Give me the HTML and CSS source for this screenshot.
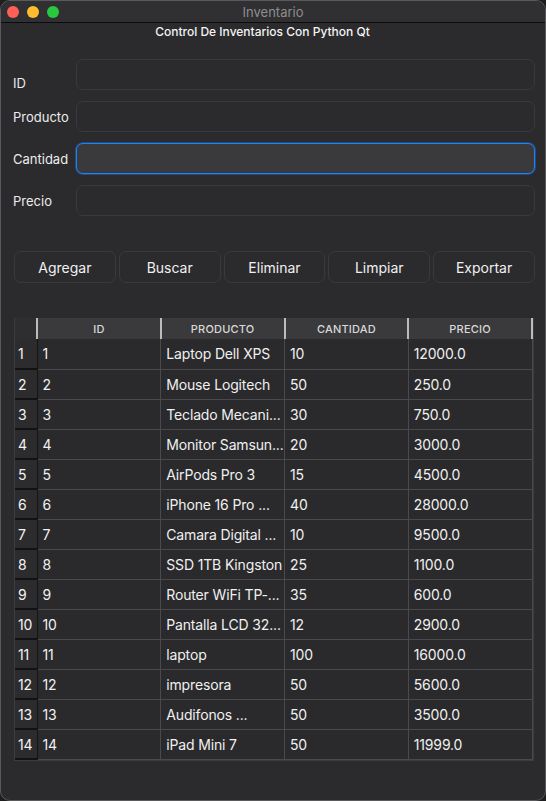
FILE: index.html
```html
<!DOCTYPE html>
<html lang="es">
<head>
<meta charset="utf-8">
<title>Inventario</title>
<link rel="stylesheet" href="styles.css">
</head>
<body>
<div class="window">
  <div class="titlebar">
    <div class="lights">
      <span class="light red"></span>
      <span class="light yellow"></span>
      <span class="light green"></span>
    </div>
    <div class="wtitle">Inventario</div>
  </div>
  <div class="content">
    <div class="subtitle">Control De Inventarios Con Python Qt</div>
    <div class="form">
      <label class="lbl lbl-id">ID</label><div class="input"></div>
      <label class="lbl">Producto</label><div class="input"></div>
      <label class="lbl">Cantidad</label><div class="input focus"></div>
      <label class="lbl">Precio</label><div class="input"></div>
    </div>
    <div class="buttons">
      <div class="btn">Agregar</div>
      <div class="btn">Buscar</div>
      <div class="btn">Eliminar</div>
      <div class="btn">Limpiar</div>
      <div class="btn">Exportar</div>
    </div>
    <div class="tablewrap">
      <table class="grid">
        <thead>
          <tr><th class="corner"></th><th>ID</th><th>PRODUCTO</th><th>CANTIDAD</th><th>PRECIO</th></tr>
        </thead>
        <tbody>
          <tr><th class="rh">1</th><td>1</td><td>Laptop Dell XPS</td><td>10</td><td>12000.0</td></tr>
          <tr><th class="rh">2</th><td>2</td><td>Mouse Logitech</td><td>50</td><td>250.0</td></tr>
          <tr><th class="rh">3</th><td>3</td><td>Teclado Mecani...</td><td>30</td><td>750.0</td></tr>
          <tr><th class="rh">4</th><td>4</td><td>Monitor Samsun...</td><td>20</td><td>3000.0</td></tr>
          <tr><th class="rh">5</th><td>5</td><td>AirPods Pro 3</td><td>15</td><td>4500.0</td></tr>
          <tr><th class="rh">6</th><td>6</td><td>iPhone 16 Pro ...</td><td>40</td><td>28000.0</td></tr>
          <tr><th class="rh">7</th><td>7</td><td>Camara Digital ...</td><td>10</td><td>9500.0</td></tr>
          <tr><th class="rh">8</th><td>8</td><td>SSD 1TB Kingston</td><td>25</td><td>1100.0</td></tr>
          <tr><th class="rh">9</th><td>9</td><td>Router WiFi TP-...</td><td>35</td><td>600.0</td></tr>
          <tr><th class="rh">10</th><td>10</td><td>Pantalla LCD 32...</td><td>12</td><td>2900.0</td></tr>
          <tr><th class="rh">11</th><td>11</td><td>laptop</td><td>100</td><td>16000.0</td></tr>
          <tr><th class="rh">12</th><td>12</td><td>impresora</td><td>50</td><td>5600.0</td></tr>
          <tr><th class="rh">13</th><td>13</td><td>Audifonos ...</td><td>50</td><td>3500.0</td></tr>
          <tr><th class="rh">14</th><td>14</td><td>iPad Mini 7</td><td>50</td><td>11999.0</td></tr>
        </tbody>
      </table>
    </div>
  </div>
</div>
</body>
</html>
```

FILE: styles.css
```css
* { box-sizing: border-box; }
html, body { margin: 0; padding: 0; background: #1e1e1e; }
body { font-family: "Inter", "Liberation Sans", sans-serif; color: #ececec; }

.window {
  width: 546px;
  height: 801px;
  background: #2b2b2d;
  border: 1px solid #5a5a5c;
  border-radius: 10px;
  overflow: hidden;
  display: flex;
  flex-direction: column;
}

.titlebar {
  height: 22px;
  flex: none;
  background: #303032;
  border-bottom: 1px solid #0c0c0c;
  display: flex;
  align-items: center;
  position: relative;
}
.lights { display: flex; gap: 8px; padding-left: 6px; }
.light { width: 12px; height: 12px; border-radius: 50%; display: block; }
.red { background: #fe5f57; }
.yellow { background: #febc2e; }
.green { background: #28c840; }
.wtitle {
  position: absolute;
  left: 0; right: 0; top: 0;
  line-height: 22px;
  text-align: center;
  font-size: 13px;
  color: #8d8d8f;
}

.content {
  flex: 1;
  padding: 0 10px 0 11px;
  display: flex;
  flex-direction: column;
}

.subtitle {
  font-size: 12px;
  font-weight: 500;
  text-align: center;
  line-height: 16px;
  margin-top: 1px;
  padding-right: 22px;
  color: #f4f4f4;
}

.form {
  margin-top: 19px;
  display: grid;
  grid-template-columns: 64px 1fr;
  grid-auto-rows: 31px;
  row-gap: 11px;
  align-items: center;
}
.lbl { font-size: 13px; line-height: 16px; color: #ececec; padding-left: 1px; }
.lbl-id { align-self: end; line-height: 14px; }
.input {
  height: 31px;
  border: 1px solid #3a3a3c;
  border-radius: 7px;
  background: #2b2b2d;
}
.input.focus {
  background: #3a3a3c;
  border: 1px solid #1a84ff;
  box-shadow: 0 0 0 1px rgba(26,132,255,0.35);
}

.buttons {
  margin-top: 35px;
  display: grid;
  grid-template-columns: repeat(5, 1fr);
  gap: 3px;
  padding-left: 2px;
}
.btn {
  height: 32px;
  border: 1px solid #3a3a3c;
  border-radius: 7px;
  display: flex;
  align-items: center;
  justify-content: center;
  font-size: 14px;
  color: #f0f0f0;
}

.tablewrap {
  margin-top: 35px;
  margin-left: 2px;
  margin-right: 1px;
  border: 1px solid #3c3c3e;
  border-top: none;
  align-self: stretch;
  height: 443px;
}
.grid {
  border-collapse: collapse;
  width: 100%;
  table-layout: fixed;
  font-size: 14px;
  letter-spacing: -0.15px;
}
.grid thead th {
  height: 21px;
  background: #3a3a3c;
  font-size: 11px;
  font-weight: 500;
  color: #d8d8d8;
  letter-spacing: 0.2px;
  padding: 0;
  border-right: 2px solid #bcbcbc;
  background-clip: padding-box;
}
.grid thead th.corner {
  width: 22px;
  background: #2e2e30;
}
.grid tbody th.rh {
  background: #2c2c2e;
  border-bottom: 2px solid #121212;
  border-right: 1px solid #141414;
  font-weight: 400;
  text-align: left;
  padding: 0 0 0 3px;
  color: #f2f2f2;
  font-size: 14px;
}
.grid td {
  height: 30px;
  padding: 0 0 0 5px;
  border: 1px solid #4a4a4c;
  border-top: none;
  white-space: nowrap;
  overflow: hidden;
  color: #f0f0f0;
  background: #2a2a2c;
}
.grid td:last-child { border-right: 1px solid #4a4a4c; }
```
